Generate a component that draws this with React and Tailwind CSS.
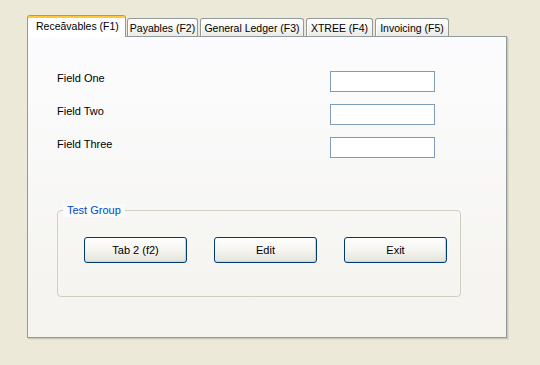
import { useState } from "react";

const tabs = [
  { id: "f1", label: "Receăvables (F1)", w: "w-[99px]" },
  { id: "f2", label: "Payables (F2)", w: "w-[71px]" },
  { id: "f3", label: "General Ledger (F3)", w: "w-[104px]" },
  { id: "f4", label: "XTREE (F4)", w: "w-[67px]" },
  { id: "f5", label: "Invoicing (F5)", w: "w-[74px]" },
];

function Field({ label }) {
  return (
    <div className="flex items-start">
      <div className="w-[273px] leading-[13px] pt-px">{label}</div>
      <input className="w-[105px] h-[21px] border border-[#7F9DB9] bg-white outline-none px-1" />
    </div>
  );
}

function XpButton({ children }) {
  return (
    <button className="w-[103px] h-[26px] rounded-[3px] border border-[#003C74] bg-gradient-to-b from-white via-[#F5F4F0] to-[#E3E2DA] shadow-[inset_-1px_-1px_0_#D6D0C5] text-black leading-[13px]">
      {children}
    </button>
  );
}

export default function App() {
  const [tab, setTab] = useState("f1");

  return (
    <div className="w-[540px] h-[365px] bg-[#ECE9D8] pt-[15px] pl-[27px] text-[11px] text-black font-['Liberation_Sans',Arial,sans-serif]">
      <div className="flex items-end text-[10.5px]">
        {tabs.map((t, i) =>
          tab === t.id ? (
            <div
              key={t.id}
              className={`${t.w} h-[22px] -mb-px relative z-10 rounded-t-[3px] border-x border-t border-[#919B9C] border-t-[#E68B2C] bg-white flex flex-col`}
            >
              <div className="h-[2px] bg-[#FFC83C]" />
              <div className="flex-1 pl-[8px] pt-[2px] leading-[13px]">{t.label}</div>
            </div>
          ) : (
            <button
              key={t.id}
              onClick={() => setTab(t.id)}
              className={`${t.w} h-[18px] ${i === 1 ? "ml-[1px]" : "ml-[2px]"} rounded-t-[3px] border-x border-t border-[#919B9C] bg-gradient-to-b from-white to-[#ECEBE6] shadow-[inset_1px_0_0_#FFFFFF] leading-[13px] pt-[2px] text-center`}
            >
              {t.label}
            </button>
          )
        )}
      </div>

      <div className="w-[480px] h-[302px] border border-[#919B9C] bg-gradient-to-b from-[#FCFCFE] to-[#F4F3EE] shadow-[1px_1px_0_#C9C7BA,2px_2px_0_#DEDBCB] pt-[34px] pl-[29px]">
        <div className="flex flex-col gap-[12px]">
          <Field label="Field One" />
          <Field label="Field Two" />
          <Field label="Field Three" />
        </div>

        <div className="relative mt-[52px] w-[404px] h-[87px] rounded-[4px] border border-[#D0D0BF] pt-[26px] pl-[26px]">
          <span className="absolute left-[5px] -top-[7px] px-[4px] bg-[#FBFBFA] text-[#0046D5] leading-[13px]">
            Test Group
          </span>
          <div className="flex gap-[27px]">
            <XpButton>Tab 2 (f2)</XpButton>
            <XpButton>Edit</XpButton>
            <XpButton>Exit</XpButton>
          </div>
        </div>
      </div>
    </div>
  );
}
